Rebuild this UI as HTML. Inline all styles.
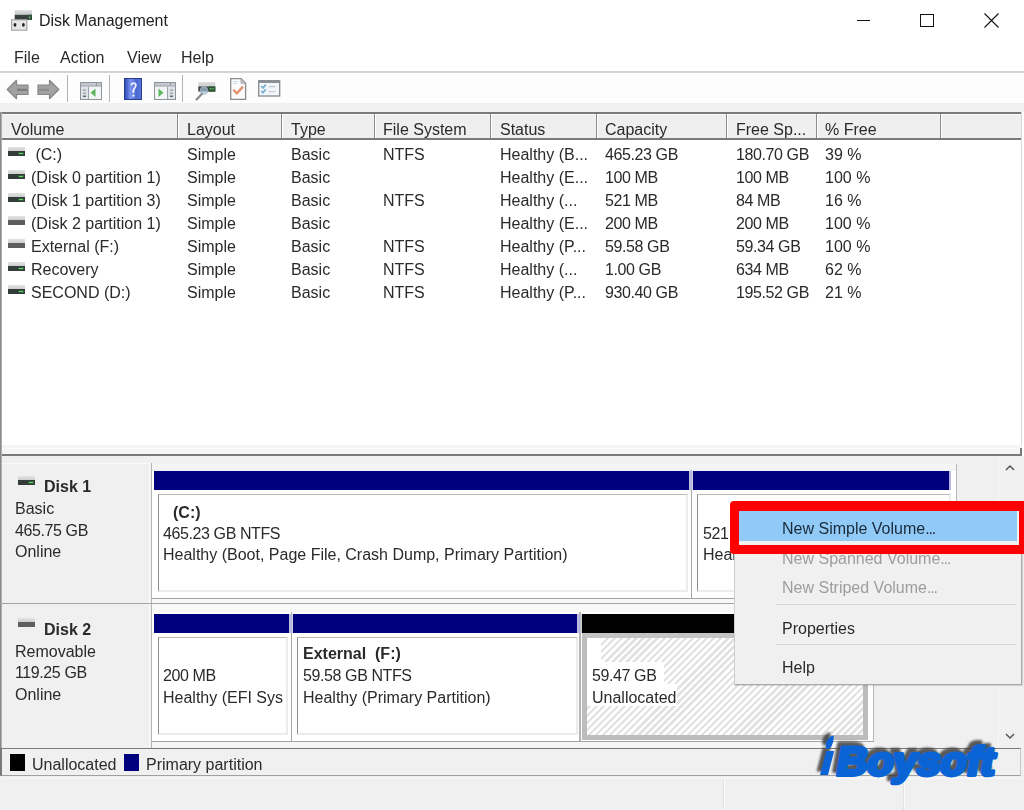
<!DOCTYPE html>
<html><head><meta charset="utf-8">
<style>
*{margin:0;padding:0;box-sizing:border-box}
html,body{width:1024px;height:810px;overflow:hidden;background:#fff}
body{position:relative;font-family:"Liberation Sans",sans-serif;font-size:16px;color:#2a2a2a}
.a{position:absolute}
.t{position:absolute;white-space:nowrap;line-height:16px;font-size:16px;padding-top:1px;will-change:transform}
.b{font-weight:bold}
.dk{width:17px;height:9px}
.dk i{position:absolute;left:0;top:0;width:17px;height:4px;background:linear-gradient(#e4e4e4,#cdcdcd)}
.dk u{position:absolute;left:0;top:4px;width:17px;height:5px;background:#343c3a}
.dk b{position:absolute;right:1px;top:5px;width:6px;height:3px;background:#2c5c3a}
.dk b:after{content:"";position:absolute;left:1px;top:1px;width:4px;height:1px;background:#6fd46f}
.dk.rm u{background:#5e5e5e}
.dk.rm b{display:none}
</style></head><body>

<!-- title bar -->
<div class="a" style="left:0;top:0;width:1024px;height:72px;background:#fff"></div>
<div class="t" style="left:39px;top:12px;color:#222">Disk Management</div>

<!-- menu -->
<div class="t" style="left:14px;top:49px">File</div>
<div class="t" style="left:60px;top:49px">Action</div>
<div class="t" style="left:127px;top:49px">View</div>
<div class="t" style="left:181px;top:49px">Help</div>
<div class="a" style="left:0;top:71px;width:1024px;height:2px;background:#d4d4d4"></div>

<!-- toolbar -->
<div class="a" style="left:0;top:73px;width:1024px;height:30px;background:#fdfdfd"></div>
<div class="a" style="left:0;top:103px;width:1024px;height:9px;background:#f0f0f0"></div>
<div class="a" style="left:67px;top:75px;width:1px;height:27px;background:#b4b4b4"></div>
<div class="a" style="left:109px;top:75px;width:1px;height:27px;background:#b4b4b4"></div>
<div class="a" style="left:182px;top:75px;width:1px;height:27px;background:#b4b4b4"></div>

<!-- list view -->
<div class="a" style="left:0;top:112px;width:1022px;height:334px;background:#fff"></div>
<div class="a" style="left:0;top:112px;width:1022px;height:2px;background:#7a7a7a"></div>
<div class="a" style="left:2px;top:114px;width:1020px;height:24px;background:#efefef;border-top:1px solid #fbfbfb"></div>
<div class="a" style="left:0;top:138px;width:1022px;height:2px;background:#7a7a7a"></div>
<div class="a" style="left:1021px;top:112px;width:1px;height:334px;background:#d8d8d8"></div>

<div class="t" style="left:11px;top:121px">Volume</div>
<div class="t" style="left:187px;top:121px">Layout</div>
<div class="t" style="left:291px;top:121px">Type</div>
<div class="t" style="left:383px;top:121px">File System</div>
<div class="t" style="left:500px;top:121px">Status</div>
<div class="t" style="left:605px;top:121px">Capacity</div>
<div class="t" style="left:736px;top:121px">Free Sp...</div>
<div class="t" style="left:825px;top:121px">% Free</div>
<div class="a" style="left:177px;top:114px;width:2px;height:24px;background:linear-gradient(90deg,#8c8c8c 50%,#fff 50%)"></div>
<div class="a" style="left:281px;top:114px;width:2px;height:24px;background:linear-gradient(90deg,#8c8c8c 50%,#fff 50%)"></div>
<div class="a" style="left:374px;top:114px;width:2px;height:24px;background:linear-gradient(90deg,#8c8c8c 50%,#fff 50%)"></div>
<div class="a" style="left:490px;top:114px;width:2px;height:24px;background:linear-gradient(90deg,#8c8c8c 50%,#fff 50%)"></div>
<div class="a" style="left:596px;top:114px;width:2px;height:24px;background:linear-gradient(90deg,#8c8c8c 50%,#fff 50%)"></div>
<div class="a" style="left:726px;top:114px;width:2px;height:24px;background:linear-gradient(90deg,#8c8c8c 50%,#fff 50%)"></div>
<div class="a" style="left:816px;top:114px;width:2px;height:24px;background:linear-gradient(90deg,#8c8c8c 50%,#fff 50%)"></div>
<div class="a" style="left:940px;top:114px;width:2px;height:24px;background:linear-gradient(90deg,#8c8c8c 50%,#fff 50%)"></div>
<div class="a dk" style="left:8px;top:147px"><i></i><u></u><b></b></div>
<div class="t" style="left:31px;top:146px">&nbsp;(C:)</div>
<div class="t" style="left:187px;top:146px">Simple</div>
<div class="t" style="left:291px;top:146px">Basic</div>
<div class="t" style="left:383px;top:146px">NTFS</div>
<div class="t" style="left:500px;top:146px">Healthy (B...</div>
<div class="t" style="letter-spacing:-0.4px;left:605px;top:146px">465.23 GB</div>
<div class="t" style="letter-spacing:-0.4px;left:736px;top:146px">180.70 GB</div>
<div class="t" style="left:825px;top:146px">39 %</div>
<div class="a dk" style="left:8px;top:170px"><i></i><u></u><b></b></div>
<div class="t" style="left:31px;top:169px">(Disk&nbsp;0&nbsp;partition&nbsp;1)</div>
<div class="t" style="left:187px;top:169px">Simple</div>
<div class="t" style="left:291px;top:169px">Basic</div>
<div class="t" style="left:500px;top:169px">Healthy (E...</div>
<div class="t" style="letter-spacing:-0.4px;left:605px;top:169px">100 MB</div>
<div class="t" style="letter-spacing:-0.4px;left:736px;top:169px">100 MB</div>
<div class="t" style="left:825px;top:169px">100 %</div>
<div class="a dk" style="left:8px;top:193px"><i></i><u></u><b></b></div>
<div class="t" style="left:31px;top:192px">(Disk&nbsp;1&nbsp;partition&nbsp;3)</div>
<div class="t" style="left:187px;top:192px">Simple</div>
<div class="t" style="left:291px;top:192px">Basic</div>
<div class="t" style="left:383px;top:192px">NTFS</div>
<div class="t" style="left:500px;top:192px">Healthy (...</div>
<div class="t" style="letter-spacing:-0.4px;left:605px;top:192px">521 MB</div>
<div class="t" style="letter-spacing:-0.4px;left:736px;top:192px">84 MB</div>
<div class="t" style="left:825px;top:192px">16 %</div>
<div class="a dk rm" style="left:8px;top:216px"><i></i><u></u><b></b></div>
<div class="t" style="left:31px;top:215px">(Disk&nbsp;2&nbsp;partition&nbsp;1)</div>
<div class="t" style="left:187px;top:215px">Simple</div>
<div class="t" style="left:291px;top:215px">Basic</div>
<div class="t" style="left:500px;top:215px">Healthy (E...</div>
<div class="t" style="letter-spacing:-0.4px;left:605px;top:215px">200 MB</div>
<div class="t" style="letter-spacing:-0.4px;left:736px;top:215px">200 MB</div>
<div class="t" style="left:825px;top:215px">100 %</div>
<div class="a dk rm" style="left:8px;top:239px"><i></i><u></u><b></b></div>
<div class="t" style="left:31px;top:238px">External&nbsp;(F:)</div>
<div class="t" style="left:187px;top:238px">Simple</div>
<div class="t" style="left:291px;top:238px">Basic</div>
<div class="t" style="left:383px;top:238px">NTFS</div>
<div class="t" style="left:500px;top:238px">Healthy (P...</div>
<div class="t" style="letter-spacing:-0.4px;left:605px;top:238px">59.58 GB</div>
<div class="t" style="letter-spacing:-0.4px;left:736px;top:238px">59.34 GB</div>
<div class="t" style="left:825px;top:238px">100 %</div>
<div class="a dk" style="left:8px;top:262px"><i></i><u></u><b></b></div>
<div class="t" style="left:31px;top:261px">Recovery</div>
<div class="t" style="left:187px;top:261px">Simple</div>
<div class="t" style="left:291px;top:261px">Basic</div>
<div class="t" style="left:383px;top:261px">NTFS</div>
<div class="t" style="left:500px;top:261px">Healthy (...</div>
<div class="t" style="letter-spacing:-0.4px;left:605px;top:261px">1.00 GB</div>
<div class="t" style="letter-spacing:-0.4px;left:736px;top:261px">634 MB</div>
<div class="t" style="left:825px;top:261px">62 %</div>
<div class="a dk" style="left:8px;top:285px"><i></i><u></u><b></b></div>
<div class="t" style="left:31px;top:284px">SECOND&nbsp;(D:)</div>
<div class="t" style="left:187px;top:284px">Simple</div>
<div class="t" style="left:291px;top:284px">Basic</div>
<div class="t" style="left:383px;top:284px">NTFS</div>
<div class="t" style="left:500px;top:284px">Healthy (P...</div>
<div class="t" style="letter-spacing:-0.4px;left:605px;top:284px">930.40 GB</div>
<div class="t" style="letter-spacing:-0.4px;left:736px;top:284px">195.52 GB</div>
<div class="t" style="left:825px;top:284px">21 %</div>

<!-- splitter band -->
<div class="a" style="left:2px;top:445px;width:1020px;height:9px;background:#f4f4f4"></div>
<div class="a" style="left:0;top:454px;width:1022px;height:2px;background:#7a7a7a"></div>
<div class="a" style="left:1020px;top:448px;width:2px;height:8px;background:#7a7a7a"></div>
<div class="a" style="left:2px;top:448px;width:1018px;height:1px;background:#fbfbfb"></div>
<!-- graphical area bg -->
<div class="a" style="left:0;top:456px;width:1024px;height:354px;background:#f0f0f0"></div>
<div class="a" style="left:0;top:112px;width:2px;height:664px;background:linear-gradient(90deg,#8a8a8a 50%,#b0b0b0 50%)"></div>

<!-- Disk 1 panel -->
<div class="a" style="left:2px;top:463px;width:149px;height:1px;background:#fafafa"></div>
<div class="a" style="left:149px;top:463px;width:1px;height:141px;background:#fafafa"></div>
<div class="a" style="left:151px;top:463px;width:1px;height:142px;background:#b4b4b4"></div>
<div class="a dk" style="left:18px;top:476px"><i></i><u></u><b></b></div>
<div class="t b" style="left:44px;top:478px">Disk 1</div>
<div class="t" style="left:15px;top:500px">Basic</div>
<div class="t" style="letter-spacing:-0.4px;left:15px;top:522px">465.75 GB</div>
<div class="t" style="left:15px;top:543px">Online</div>

<!-- Disk 1 partitions container -->
<div class="a" style="left:152px;top:464px;width:805px;height:134px;background:#fff"></div>
<div class="a" style="left:152px;top:464px;width:804px;height:5px;background:#f5f5f5"></div>
<div class="a" style="left:152px;top:469px;width:804px;height:2px;background:#f2f2fc"></div>
<div class="a" style="left:956px;top:464px;width:1px;height:134px;background:#b8b8b8"></div>
<div class="a" style="left:152px;top:598px;width:805px;height:1px;background:#a4a4a4"></div>
<div class="a" style="left:152px;top:599px;width:805px;height:4px;background:#f8f8f8"></div>
<div class="a" style="left:0px;top:603px;width:957px;height:1px;background:#a4a4a4"></div>
<div class="a" style="left:691px;top:470px;width:1px;height:128px;background:#a8a8a8"></div>
<div class="a" style="left:154px;top:471px;width:535px;height:19px;background:#00007f"></div>
<div class="a" style="left:689px;top:471px;width:4px;height:19px;background:linear-gradient(90deg,#c4c4e8,#b0b0d0 50%,#d8d8f4)"></div>
<div class="a" style="left:693px;top:471px;width:256px;height:19px;background:#00007f"></div>
<div class="a" style="left:949px;top:471px;width:2px;height:19px;background:#b4b4dc"></div>
<div class="a" style="left:158px;top:494px;width:530px;height:98px;border-left:1px solid #8e8e8e;border-top:1px solid #b8b8b8;border-right:2px solid #ececec;border-bottom:2px solid #ececec"></div>
<div class="a" style="left:697px;top:494px;width:254px;height:98px;border-left:1px solid #8e8e8e;border-top:1px solid #b8b8b8;border-right:2px solid #ececec;border-bottom:2px solid #ececec"></div>
<div class="t b" style="left:173px;top:504px">(C:)</div>
<div class="t" style="letter-spacing:-0.4px;left:163px;top:525px">465.23 GB NTFS</div>
<div class="t" style="left:163px;top:546px">Healthy (Boot, Page File, Crash Dump, Primary Partition)</div>
<div class="t" style="letter-spacing:-0.4px;left:703px;top:525px">521 MB NTFS</div>
<div class="t" style="left:703px;top:546px">Healthy (Recovery Partition)</div>

<!-- Disk 2 panel -->
<div class="a" style="left:151px;top:604px;width:1px;height:144px;background:#b4b4b4"></div>
<div class="a" style="left:149px;top:604px;width:1px;height:143px;background:#fafafa"></div>
<div class="a dk rm" style="left:18px;top:618px"><i></i><u></u><b></b></div>
<div class="t b" style="left:44px;top:621px">Disk 2</div>
<div class="t" style="left:15px;top:643px">Removable</div>
<div class="t" style="letter-spacing:-0.4px;left:15px;top:664px">119.25 GB</div>
<div class="t" style="left:15px;top:686px">Online</div>

<!-- Disk 2 partitions container -->
<div class="a" style="left:152px;top:604px;width:722px;height:137px;background:#fff"></div>
<div class="a" style="left:152px;top:604px;width:805px;height:8px;background:#f8f8f8"></div>
<div class="a" style="left:873px;top:612px;width:1px;height:129px;background:#b8b8b8"></div>
<div class="a" style="left:152px;top:741px;width:722px;height:1px;background:#a4a4a4"></div>
<div class="a" style="left:152px;top:742px;width:722px;height:5px;background:#f6f6f6"></div>
<div class="a" style="left:291px;top:612px;width:1px;height:129px;background:#a8a8a8"></div>
<div class="a" style="left:579px;top:612px;width:2px;height:129px;background:#b4b4b4"></div>
<div class="a" style="left:154px;top:614px;width:135px;height:19px;background:#00007f"></div>
<div class="a" style="left:289px;top:614px;width:4px;height:19px;background:linear-gradient(90deg,#c4c4e8,#b0b0d0 50%,#d8d8f4)"></div>
<div class="a" style="left:293px;top:614px;width:284px;height:19px;background:#00007f"></div>
<div class="a" style="left:577px;top:614px;width:5px;height:19px;background:linear-gradient(90deg,#c4c4e8,#b0b0d0 50%,#d8d8d8)"></div>
<div class="a" style="left:582px;top:614px;width:285px;height:19px;background:#000"></div>
<div class="a" style="left:158px;top:637px;width:130px;height:98px;border-left:1px solid #8e8e8e;border-top:1px solid #b8b8b8;border-right:2px solid #ececec;border-bottom:2px solid #ececec"></div>
<div class="a" style="left:297px;top:637px;width:281px;height:98px;border-left:1px solid #8e8e8e;border-top:1px solid #b8b8b8;border-right:2px solid #ececec;border-bottom:2px solid #ececec"></div>
<div class="a" style="left:582px;top:633px;width:286px;height:107px;border:5px solid #bcbcbc;border-top-color:#c4c4c4;border-left-color:#bdbdbd;background:repeating-linear-gradient(-45deg,#fff 0,#fff 2.6px,#e2e2e2 2.6px,#e2e2e2 5px)"></div>
<div class="a" style="left:158px;top:660px;width:125px;height:50px;overflow:hidden"><div class="t" style="letter-spacing:-0.4px;left:5px;top:7px">200 MB</div><div class="t" style="left:5px;top:29px">Healthy (EFI System Partition)</div></div>
<div class="t b" style="left:303px;top:645px">External&nbsp;&nbsp;(F:)</div>
<div class="t" style="letter-spacing:-0.4px;left:303px;top:667px">59.58 GB NTFS</div>
<div class="t" style="left:303px;top:689px">Healthy (Primary Partition)</div>
<div class="a" style="left:587px;top:638px;width:14px;height:24px;background:#fff"></div>
<div class="a" style="left:587px;top:662px;width:77px;height:22px;background:#fff"></div>
<div class="a" style="left:587px;top:684px;width:90px;height:22px;background:#fff"></div>
<div class="t" style="letter-spacing:-0.4px;left:592px;top:667px">59.47 GB</div>
<div class="t" style="left:592px;top:689px">Unallocated</div>

<!-- scrollbar -->
<div class="a" style="left:998px;top:456px;width:1px;height:292px;background:#f8f8f8"></div>

<!-- legend -->
<div class="a" style="left:0;top:748px;width:1021px;height:28px;background:#f0f0f0;border-top:1px solid #7a7a7a;border-bottom:1px solid #a0a0a0;border-left:2px solid #7a7a7a;border-right:1px solid #c8c8c8"></div>
<div class="a" style="left:10px;top:754px;width:15px;height:17px;background:#000"></div>
<div class="t" style="left:32px;top:756px">Unallocated</div>
<div class="a" style="left:124px;top:754px;width:15px;height:17px;background:#00007f"></div>
<div class="t" style="left:146px;top:756px">Primary partition</div>

<!-- status bar -->
<div class="a" style="left:0;top:777px;width:1024px;height:33px;background:#f0f0f0"></div>
<div class="a" style="left:2px;top:778px;width:1020px;height:1px;background:#f8f8f8"></div>
<div class="a" style="left:723px;top:779px;width:1px;height:31px;background:#e2e2e2"></div>
<div class="a" style="left:724px;top:779px;width:1px;height:31px;background:#fafafa"></div>
<div class="a" style="left:903px;top:779px;width:1px;height:31px;background:#e2e2e2"></div>
<div class="a" style="left:904px;top:779px;width:1px;height:31px;background:#fafafa"></div>


<!-- title icon -->
<svg class="a" style="left:10px;top:9px" width="24" height="23" viewBox="0 0 24 23">
 <defs><linearGradient id="tg" x1="0" y1="0" x2="0" y2="1"><stop offset="0" stop-color="#e2e4e4"/><stop offset="1" stop-color="#c2c6c6"/></linearGradient></defs>
 <rect x="4.7" y="1" width="17.3" height="4.8" fill="url(#tg)"/>
 <rect x="4.7" y="5.8" width="17.3" height="5" fill="#3a403e"/>
 <rect x="17" y="5.8" width="5" height="5" fill="#2e5238"/>
 <rect x="19" y="7.5" width="1.2" height="2" fill="#7aa888"/>
 <rect x="1.6" y="10.8" width="15.3" height="10.4" fill="#e6e6e6" stroke="#9a9a9a" stroke-width="1"/>
 <ellipse cx="5" cy="15.8" rx="1.4" ry="1.9" fill="#222"/>
 <ellipse cx="13.4" cy="15.8" rx="1.4" ry="1.9" fill="#222"/>
</svg>

<!-- window controls -->
<div class="a" style="left:857px;top:20px;width:13px;height:1px;background:#111"></div>
<div class="a" style="left:920px;top:14px;width:14px;height:13px;border:1px solid #111"></div>
<svg class="a" style="left:984px;top:13px" width="15" height="15" viewBox="0 0 15 15"><path d="M0.5 0.5L14.5 14.5M14.5 0.5L0.5 14.5" stroke="#111" stroke-width="1.1"/></svg>

<!-- toolbar icons -->
<svg class="a" style="left:6px;top:79px" width="23" height="21" viewBox="0 0 23 21">
 <path d="M1.2 10.5L10.5 1.3V6H22V15.5H10.5V19.7Z" fill="#a2a2a2" stroke="#858585" stroke-width="1.2" stroke-linejoin="round"/>
 <path d="M11 10.8H21" stroke="#7c7c7c" stroke-width="2.2"/>
</svg>
<svg class="a" style="left:37px;top:79px" width="23" height="21" viewBox="0 0 23 21">
 <path d="M21.8 10.5L12.5 1.3V6H1V15.5H12.5V19.7Z" fill="#a2a2a2" stroke="#858585" stroke-width="1.2" stroke-linejoin="round"/>
 <path d="M2 10.8H12" stroke="#8a8a8a" stroke-width="2"/>
</svg>
<svg class="a" style="left:80px;top:82px" width="22" height="18" viewBox="0 0 22 18">
 <rect x="0.5" y="0.5" width="21" height="17" fill="#f2f4f6" stroke="#8e949a"/>
 <rect x="1" y="1" width="20" height="2.5" fill="#c2c8ce"/>
 <rect x="1" y="3.5" width="20" height="1" fill="#8e949a"/>
 <rect x="16" y="1" width="1" height="2.5" fill="#8e949a"/>
 <rect x="1" y="5" width="7" height="12" fill="#dfe4e9"/>
 <rect x="8" y="5" width="1" height="12" fill="#9aa2aa"/>
 <rect x="3" y="7.5" width="3" height="1.5" fill="#9aa6b2"/>
 <rect x="3" y="10.5" width="3" height="1.5" fill="#9aa6b2"/>
 <rect x="3" y="13.5" width="3" height="1.5" fill="#5a6874"/>
 <path d="M15.5 6.5V15L10.5 10.8Z" fill="#5cb85c"/>
</svg>
<svg class="a" style="left:124px;top:78px" width="18" height="22" viewBox="0 0 18 22">
 <defs><linearGradient id="hg" x1="0" y1="0" x2="1" y2="0"><stop offset="0" stop-color="#2a46b4"/><stop offset="0.35" stop-color="#7a94f0"/><stop offset="0.7" stop-color="#4a68d0"/><stop offset="1" stop-color="#5a7ae0"/></linearGradient></defs>
 <rect x="0.5" y="0.5" width="17" height="21" fill="url(#hg)" stroke="#2c3c8c"/>
 <path d="M6.6 7.6C6.6 5.2 8 4.2 9.6 4.2C11.5 4.2 12.8 5.4 12.8 7.3C12.8 9.6 10.6 10.4 10.4 13.4L10.2 15H8.4L8.4 13.2C8.5 9.8 10.8 9.2 10.8 7.4C10.8 6.5 10.3 6 9.6 6C8.9 6 8.5 6.6 8.5 7.6Z" fill="#e8eeff"/>
 <rect x="8.2" y="16.4" width="2.4" height="2.4" rx="1" fill="#e8eeff"/>
</svg>
<svg class="a" style="left:154px;top:82px" width="22" height="18" viewBox="0 0 22 18">
 <rect x="0.5" y="0.5" width="21" height="17" fill="#f2f4f6" stroke="#8e949a"/>
 <rect x="1" y="1" width="20" height="2.5" fill="#c2c8ce"/>
 <rect x="1" y="3.5" width="20" height="1" fill="#8e949a"/>
 <rect x="16" y="1" width="1" height="2.5" fill="#8e949a"/>
 <rect x="14" y="5" width="7" height="12" fill="#dfe4e9"/>
 <rect x="13" y="5" width="1" height="12" fill="#9aa2aa"/>
 <rect x="16" y="7.5" width="3" height="1.5" fill="#9aa6b2"/>
 <rect x="16" y="10.5" width="3" height="1.5" fill="#9aa6b2"/>
 <rect x="16" y="13.5" width="3" height="1.5" fill="#5a6874"/>
 <path d="M4.5 6.5V15L9.5 10.8Z" fill="#5cb85c"/>
</svg>
<svg class="a" style="left:194px;top:81px" width="24" height="20" viewBox="0 0 24 20">
 <rect x="4.3" y="1.2" width="17" height="4.2" fill="#d4d6d6"/>
 <rect x="4.3" y="5.4" width="17" height="5.2" fill="#3a4442"/>
 <rect x="14.7" y="5.4" width="6.6" height="5.2" fill="#2c5a34"/>
 <rect x="16" y="7.2" width="1.2" height="1.2" fill="#8ed08e"/>
 <rect x="18.4" y="7.2" width="1.2" height="1.2" fill="#8ed08e"/>
 <circle cx="10" cy="9.5" r="3.8" fill="#a8c4dc" fill-opacity="0.7" stroke="#9fb4c4" stroke-width="0.8"/>
 <path d="M8 12.8L2.6 18.4" stroke="#8a8a8a" stroke-width="2.2" stroke-linecap="round"/>
</svg>
<svg class="a" style="left:230px;top:78px" width="17" height="22" viewBox="0 0 17 22">
 <path d="M0.7 0.7H11L15.6 5.3V21.3H0.7Z" fill="#fbfbfb" stroke="#8a8a8a" stroke-width="1.3"/>
 <path d="M11 0.7V5.3H15.6Z" fill="#c8c8c8" stroke="#9a9a9a" stroke-width="0.8"/>
 <path d="M3 3.5H8M3 5.5H7" stroke="#c8d8ec" stroke-width="0.9"/>
 <path d="M3.3 11.8L6.8 15.3L13 8.6" fill="none" stroke="#e4906e" stroke-width="2.3"/>
</svg>
<svg class="a" style="left:258px;top:80px" width="23" height="17" viewBox="0 0 23 17">
 <rect x="0.7" y="0.7" width="21" height="15.3" fill="#f3f7fa" stroke="#858a90" stroke-width="1.3"/>
 <rect x="1" y="1" width="20.5" height="2" fill="#8a9098"/>
 <path d="M3.2 6.2L5 8L7.8 4.6" fill="none" stroke="#7aaed2" stroke-width="1.7"/>
 <path d="M3.2 11L5 12.8L7.8 9.4" fill="none" stroke="#7aaed2" stroke-width="1.7"/>
 <rect x="10.5" y="6" width="7" height="1.2" fill="#c0c8d0"/>
 <rect x="10.5" y="11" width="7" height="1.2" fill="#c8ccd0"/>
</svg>

<!-- scrollbar chevrons -->
<svg class="a" style="left:1005px;top:464px" width="10" height="7" viewBox="0 0 10 7"><path d="M1 6L5 2L9 6" fill="none" stroke="#555" stroke-width="1.5"/></svg>
<svg class="a" style="left:1005px;top:733px" width="10" height="7" viewBox="0 0 10 7"><path d="M1 1L5 5L9 1" fill="none" stroke="#555" stroke-width="1.5"/></svg>

<!-- context menu -->
<div class="a" style="left:734px;top:503px;width:288px;height:182px;background:#f0f0f0;border:1px solid #cfcfcf;border-right-color:#a8a8a8;border-bottom-color:#a8a8a8;box-shadow:1px 1px 1px rgba(0,0,0,0.12)"></div>
<div class="a" style="left:739px;top:510px;width:278px;height:31px;background:#91c9f7"></div>
<div class="t" style="left:782px;top:520px;color:#1a2a3a">New Simple Volume<span style="letter-spacing:-1.2px">...</span></div>
<div class="t" style="left:782px;top:550px;color:#9d9d9d">New Spanned Volume<span style="letter-spacing:-1.2px">...</span></div>
<div class="t" style="left:782px;top:579px;color:#9d9d9d">New Striped Volume<span style="letter-spacing:-1.2px">...</span></div>
<div class="a" style="left:776px;top:604px;width:240px;height:1px;background:#d8d8d8"></div>
<div class="t" style="left:782px;top:620px">Properties</div>
<div class="a" style="left:776px;top:644px;width:240px;height:1px;background:#d8d8d8"></div>
<div class="t" style="left:782px;top:659px">Help</div>
<!-- red highlight -->
<div class="a" style="left:730px;top:501px;width:298px;height:53px;border:9px solid #f00;border-top-width:10px;border-radius:4px"></div>

<!-- logo -->
<svg class="a" style="left:790px;top:720px" width="234" height="75" viewBox="0 0 234 75">
 <defs><filter id="sh" x="-10%" y="-30%" width="120%" height="160%"><feGaussianBlur stdDeviation="1.2"/></filter></defs>
 <g filter="url(#sh)" opacity="0.82" transform="translate(-3.5,-3.5)">
  <path d="M30 55L36.2 31H44.2L38 55Z" fill="#383838"/>
  <path d="M37.6 29C35.6 29 35.3 26 36.1 22.5C37.1 19 40.1 16 43.7 15.5C43.9 19 43.1 23 41.6 26C40.6 28 39.6 29 37.6 29Z" fill="#383838"/>
  <g transform="translate(0,55) skewX(-10) translate(0,-55)"><text x="45" y="55" font-family="Liberation Sans" font-weight="bold" font-size="40" textLength="158" lengthAdjust="spacingAndGlyphs" fill="#383838" stroke="#383838" stroke-width="4" stroke-linejoin="round">Boysoft</text></g>
 </g>
 <path d="M30 55L36.2 31H44.2L38 55Z" fill="#0a64d6"/>
 <path d="M37.6 29C35.6 29 35.3 26 36.1 22.5C37.1 19 40.1 16 43.7 15.5C43.9 19 43.1 23 41.6 26C40.6 28 39.6 29 37.6 29Z" fill="#0a64d6"/>
 <g transform="translate(0,55) skewX(-10) translate(0,-55)"><text x="45" y="55" font-family="Liberation Sans" font-weight="bold" font-size="40" textLength="158" lengthAdjust="spacingAndGlyphs" fill="#0a64d6" stroke="#0a64d6" stroke-width="4" stroke-linejoin="round">Boysoft</text></g>
</svg>
</body></html>
